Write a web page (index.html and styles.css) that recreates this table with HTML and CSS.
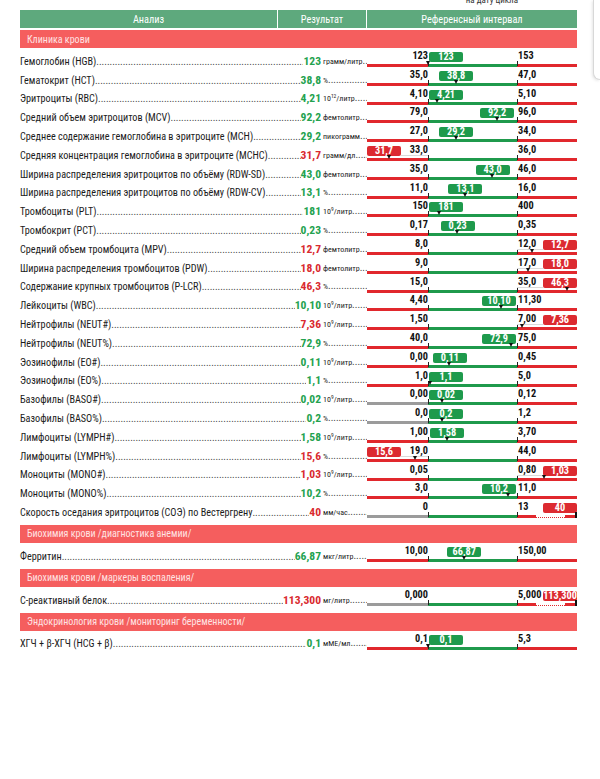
FILE: index.html
```html
<!DOCTYPE html>
<html lang="ru">
<head>
<meta charset="utf-8">
<title>Анализ крови</title>
<link rel="stylesheet" href="styles.css">
</head>
<body>
<div class="side"></div>
<div class="page">
  <div class="topnote"><span>на дату цикла</span></div>
  <div class="thead">
    <div class="th-name">Анализ</div>
    <div class="th-res">Результат</div>
    <div class="th-ref">Референсный интервал</div>
  </div>

  <div class="sect first">Клиника крови</div>

  <div class="row">
    <div class="name"><span class="lbl">Гемоглобин (HGB)</span><span class="dots"></span><b class="val g">123</b></div>
    <div class="unit"><span class="u">грамм/литр</span><span class="dots"></span></div>
    <div class="scale">
      <div class="track"><i class="zl"></i><i class="zm"></i><i class="zh"></i></div>
      <i class="tick l"></i><i class="tick h"></i>
      <span class="lim l">123</span><span class="lim h">153</span>
      <span class="badge g" style="left:62px">123</span><i class="ptr" style="left:61px"></i>
    </div>
  </div>

  <div class="row">
    <div class="name"><span class="lbl">Гематокрит (HCT)</span><span class="dots"></span><b class="val g">38,8</b></div>
    <div class="unit"><span class="u">%</span><span class="dots"></span></div>
    <div class="scale">
      <div class="track"><i class="zl"></i><i class="zm"></i><i class="zh"></i></div>
      <i class="tick l"></i><i class="tick h"></i>
      <span class="lim l">35,0</span><span class="lim h">47,0</span>
      <span class="badge g" style="left:72.2px">38,8</span><i class="ptr" style="left:89.2px"></i>
    </div>
  </div>

  <div class="row">
    <div class="name"><span class="lbl">Эритроциты (RBC)</span><span class="dots"></span><b class="val g">4,21</b></div>
    <div class="unit"><span class="u">10<sup>12</sup>/литр</span><span class="dots"></span></div>
    <div class="scale">
      <div class="track"><i class="zl"></i><i class="zm"></i><i class="zh"></i></div>
      <i class="tick l"></i><i class="tick h"></i>
      <span class="lim l">4,10</span><span class="lim h">5,10</span>
      <span class="badge g" style="left:62px">4,21</span><i class="ptr" style="left:70.8px"></i>
    </div>
  </div>

  <div class="row">
    <div class="name"><span class="lbl">Средний объем эритроцитов (MCV)</span><span class="dots"></span><b class="val g">92,2</b></div>
    <div class="unit"><span class="u">фемтолитр</span><span class="dots"></span></div>
    <div class="scale">
      <div class="track"><i class="zl"></i><i class="zm"></i><i class="zh"></i></div>
      <i class="tick l"></i><i class="tick h"></i>
      <span class="lim l">79,0</span><span class="lim h">96,0</span>
      <span class="badge g" style="left:113.1px">92,2</span><i class="ptr" style="left:130.1px"></i>
    </div>
  </div>

  <div class="row">
    <div class="name"><span class="lbl">Среднее содержание гемоглобина в эритроците (MCH)</span><span class="dots"></span><b class="val g">29,2</b></div>
    <div class="unit"><span class="u">пикограмм</span><span class="dots"></span></div>
    <div class="scale">
      <div class="track"><i class="zl"></i><i class="zm"></i><i class="zh"></i></div>
      <i class="tick l"></i><i class="tick h"></i>
      <span class="lim l">27,0</span><span class="lim h">34,0</span>
      <span class="badge g" style="left:72px">29,2</span><i class="ptr" style="left:89px"></i>
    </div>
  </div>

  <div class="row">
    <div class="name"><span class="lbl">Средняя концентрация гемоглобина в эритроците (MCHC)</span><span class="dots"></span><b class="val r">31,7</b></div>
    <div class="unit"><span class="u">грамм/дл</span><span class="dots"></span></div>
    <div class="scale">
      <div class="track"><i class="zl"></i><i class="zm"></i><i class="zh"></i></div>
      <i class="tick l"></i><i class="tick h"></i>
      <i class="conn lo"></i>
      <span class="lim l">33,0</span><span class="lim h">36,0</span>
      <span class="badge r out-lo">31,7</span><i class="ptr" style="left:22.4px"></i>
    </div>
  </div>

  <div class="row">
    <div class="name"><span class="lbl">Ширина распределения эритроцитов по объёму (RDW-SD)</span><span class="dots"></span><b class="val g">43,0</b></div>
    <div class="unit"><span class="u">фемтолитр</span><span class="dots"></span></div>
    <div class="scale">
      <div class="track"><i class="zl"></i><i class="zm"></i><i class="zh"></i></div>
      <i class="tick l"></i><i class="tick h"></i>
      <span class="lim l">35,0</span><span class="lim h">46,0</span>
      <span class="badge g" style="left:108.7px">43,0</span><i class="ptr" style="left:125.7px"></i>
    </div>
  </div>

  <div class="row">
    <div class="name"><span class="lbl">Ширина распределения эритроцитов по объёму (RDW-CV)</span><span class="dots"></span><b class="val g">13,1</b></div>
    <div class="unit"><span class="u">%</span><span class="dots"></span></div>
    <div class="scale">
      <div class="track"><i class="zl"></i><i class="zm"></i><i class="zh"></i></div>
      <i class="tick l"></i><i class="tick h"></i>
      <span class="lim l">11,0</span><span class="lim h">16,0</span>
      <span class="badge g" style="left:81.4px">13,1</span><i class="ptr" style="left:98.4px"></i>
    </div>
  </div>

  <div class="row">
    <div class="name"><span class="lbl">Тромбоциты (PLT)</span><span class="dots"></span><b class="val g">181</b></div>
    <div class="unit"><span class="u">10<sup>9</sup>/литр</span><span class="dots"></span></div>
    <div class="scale">
      <div class="track"><i class="zl"></i><i class="zm"></i><i class="zh"></i></div>
      <i class="tick l"></i><i class="tick h"></i>
      <span class="lim l">150</span><span class="lim h">400</span>
      <span class="badge g" style="left:62px">181</span><i class="ptr" style="left:72px"></i>
    </div>
  </div>

  <div class="row">
    <div class="name"><span class="lbl">Тромбокрит (PCT)</span><span class="dots"></span><b class="val g">0,23</b></div>
    <div class="unit"><span class="u">%</span><span class="dots"></span></div>
    <div class="scale">
      <div class="track"><i class="zl"></i><i class="zm"></i><i class="zh"></i></div>
      <i class="tick l"></i><i class="tick h"></i>
      <span class="lim l">0,17</span><span class="lim h">0,35</span>
      <span class="badge g" style="left:73.7px">0,23</span><i class="ptr" style="left:90.7px"></i>
    </div>
  </div>

  <div class="row">
    <div class="name"><span class="lbl">Средний объем тромбоцита (MPV)</span><span class="dots"></span><b class="val r">12,7</b></div>
    <div class="unit"><span class="u">фемтолитр</span><span class="dots"></span></div>
    <div class="scale">
      <div class="track"><i class="zl"></i><i class="zm"></i><i class="zh"></i></div>
      <i class="tick l"></i><i class="tick h"></i>
      <i class="conn hi"></i>
      <span class="lim l">8,0</span><span class="lim h">12,0</span>
      <span class="badge r out-hi">12,7</span><i class="ptr" style="left:165.6px"></i>
    </div>
  </div>

  <div class="row">
    <div class="name"><span class="lbl">Ширина распределения тромбоцитов (PDW)</span><span class="dots"></span><b class="val r">18,0</b></div>
    <div class="unit"><span class="u">фемтолитр</span><span class="dots"></span></div>
    <div class="scale">
      <div class="track"><i class="zl"></i><i class="zm"></i><i class="zh"></i></div>
      <i class="tick l"></i><i class="tick h"></i>
      <i class="conn hi"></i>
      <span class="lim l">9,0</span><span class="lim h">17,0</span>
      <span class="badge r out-hi">18,0</span><i class="ptr" style="left:161.1px"></i>
    </div>
  </div>

  <div class="row">
    <div class="name"><span class="lbl">Содержание крупных тромбоцитов (P-LCR)</span><span class="dots"></span><b class="val r">46,3</b></div>
    <div class="unit"><span class="u">%</span><span class="dots"></span></div>
    <div class="scale">
      <div class="track"><i class="zl"></i><i class="zm"></i><i class="zh"></i></div>
      <i class="tick l"></i><i class="tick h"></i>
      <i class="conn hi"></i>
      <span class="lim l">15,0</span><span class="lim h">35,0</span>
      <span class="badge r out-hi">46,3</span><i class="ptr" style="left:200.3px"></i>
    </div>
  </div>

  <div class="row">
    <div class="name"><span class="lbl">Лейкоциты (WBC)</span><span class="dots"></span><b class="val g">10,10</b></div>
    <div class="unit"><span class="u">10<sup>9</sup>/литр</span><span class="dots"></span></div>
    <div class="scale">
      <div class="track"><i class="zl"></i><i class="zm"></i><i class="zh"></i></div>
      <i class="tick l"></i><i class="tick h"></i>
      <span class="lim l">4,40</span><span class="lim h">11,30</span>
      <span class="badge g" style="left:115px">10,10</span><i class="ptr" style="left:134.5px"></i>
    </div>
  </div>

  <div class="row">
    <div class="name"><span class="lbl">Нейтрофилы (NEUT#)</span><span class="dots"></span><b class="val r">7,36</b></div>
    <div class="unit"><span class="u">10<sup>9</sup>/литр</span><span class="dots"></span></div>
    <div class="scale">
      <div class="track"><i class="zl"></i><i class="zm"></i><i class="zh"></i></div>
      <i class="tick l"></i><i class="tick h"></i>
      <i class="conn hi"></i>
      <span class="lim l">1,50</span><span class="lim h">7,00</span>
      <span class="badge r out-hi">7,36</span><i class="ptr" style="left:155.8px"></i>
    </div>
  </div>

  <div class="row">
    <div class="name"><span class="lbl">Нейтрофилы (NEUT%)</span><span class="dots"></span><b class="val g">72,9</b></div>
    <div class="unit"><span class="u">%</span><span class="dots"></span></div>
    <div class="scale">
      <div class="track"><i class="zl"></i><i class="zm"></i><i class="zh"></i></div>
      <i class="tick l"></i><i class="tick h"></i>
      <span class="lim l">40,0</span><span class="lim h">75,0</span>
      <span class="badge g" style="left:115px">72,9</span><i class="ptr" style="left:144.7px"></i>
    </div>
  </div>

  <div class="row">
    <div class="name"><span class="lbl">Эозинофилы (EO#)</span><span class="dots"></span><b class="val g">0,11</b></div>
    <div class="unit"><span class="u">10<sup>9</sup>/литр</span><span class="dots"></span></div>
    <div class="scale">
      <div class="track"><i class="zl"></i><i class="zm"></i><i class="zh"></i></div>
      <i class="tick l"></i><i class="tick h"></i>
      <span class="lim l">0,00</span><span class="lim h">0,45</span>
      <span class="badge g" style="left:65.8px">0,11</span><i class="ptr" style="left:82.8px"></i>
    </div>
  </div>

  <div class="row">
    <div class="name"><span class="lbl">Эозинофилы (EO%)</span><span class="dots"></span><b class="val g">1,1</b></div>
    <div class="unit"><span class="u">%</span><span class="dots"></span></div>
    <div class="scale">
      <div class="track"><i class="zl"></i><i class="zm"></i><i class="zh"></i></div>
      <i class="tick l"></i><i class="tick h"></i>
      <span class="lim l">1,0</span><span class="lim h">5,0</span>
      <span class="badge g" style="left:62px">1,1</span><i class="ptr" style="left:63.2px"></i>
    </div>
  </div>

  <div class="row">
    <div class="name"><span class="lbl">Базофилы (BASO#)</span><span class="dots"></span><b class="val g">0,02</b></div>
    <div class="unit"><span class="u">10<sup>9</sup>/литр</span><span class="dots"></span></div>
    <div class="scale">
      <div class="track"><i class="zl gray"></i><i class="zm"></i><i class="zh"></i></div>
      <i class="tick l"></i><i class="tick h"></i>
      <span class="lim l">0,00</span><span class="lim h">0,12</span>
      <span class="badge g" style="left:62px">0,02</span><i class="ptr" style="left:75.8px"></i>
    </div>
  </div>

  <div class="row">
    <div class="name"><span class="lbl">Базофилы (BASO%)</span><span class="dots"></span><b class="val g">0,2</b></div>
    <div class="unit"><span class="u">%</span><span class="dots"></span></div>
    <div class="scale">
      <div class="track"><i class="zl gray"></i><i class="zm"></i><i class="zh"></i></div>
      <i class="tick l"></i><i class="tick h"></i>
      <span class="lim l">0,0</span><span class="lim h">1,2</span>
      <span class="badge g" style="left:62px">0,2</span><i class="ptr" style="left:75.8px"></i>
    </div>
  </div>

  <div class="row">
    <div class="name"><span class="lbl">Лимфоциты (LYMPH#)</span><span class="dots"></span><b class="val g">1,58</b></div>
    <div class="unit"><span class="u">10<sup>9</sup>/литр</span><span class="dots"></span></div>
    <div class="scale">
      <div class="track"><i class="zl"></i><i class="zm"></i><i class="zh"></i></div>
      <i class="tick l"></i><i class="tick h"></i>
      <span class="lim l">1,00</span><span class="lim h">3,70</span>
      <span class="badge g" style="left:63.1px">1,58</span><i class="ptr" style="left:80.1px"></i>
    </div>
  </div>

  <div class="row">
    <div class="name"><span class="lbl">Лимфоциты (LYMPH%)</span><span class="dots"></span><b class="val r">15,6</b></div>
    <div class="unit"><span class="u">%</span><span class="dots"></span></div>
    <div class="scale">
      <div class="track"><i class="zl"></i><i class="zm"></i><i class="zh"></i></div>
      <i class="tick l"></i><i class="tick h"></i>
      <i class="conn lo"></i>
      <span class="lim l">19,0</span><span class="lim h">44,0</span>
      <span class="badge r out-lo">15,6</span><i class="ptr" style="left:48.9px"></i>
    </div>
  </div>

  <div class="row">
    <div class="name"><span class="lbl">Моноциты (MONO#)</span><span class="dots"></span><b class="val r">1,03</b></div>
    <div class="unit"><span class="u">10<sup>9</sup>/литр</span><span class="dots"></span></div>
    <div class="scale">
      <div class="track"><i class="zl"></i><i class="zm"></i><i class="zh"></i></div>
      <i class="tick l"></i><i class="tick h"></i>
      <i class="conn hi"></i>
      <span class="lim l">0,05</span><span class="lim h">0,80</span>
      <span class="badge r out-hi">1,03</span><i class="ptr" style="left:177.3px"></i>
    </div>
  </div>

  <div class="row">
    <div class="name"><span class="lbl">Моноциты (MONO%)</span><span class="dots"></span><b class="val g">10,2</b></div>
    <div class="unit"><span class="u">%</span><span class="dots"></span></div>
    <div class="scale">
      <div class="track"><i class="zl"></i><i class="zm"></i><i class="zh"></i></div>
      <i class="tick l"></i><i class="tick h"></i>
      <span class="lim l">3,0</span><span class="lim h">11,0</span>
      <span class="badge g" style="left:115px">10,2</span><i class="ptr" style="left:141.1px"></i>
    </div>
  </div>

  <div class="row">
    <div class="name"><span class="lbl">Скорость оседания эритроцитов (СОЭ) по Вестергрену</span><span class="dots"></span><b class="val r">40</b></div>
    <div class="unit"><span class="u">мм/час</span><span class="dots"></span></div>
    <div class="scale">
      <div class="track"><i class="zl gray"></i><i class="zm"></i><i class="zh over"><i class="s1"></i><i class="dl"></i><i class="s2"></i></i></div>
      <i class="tick l"></i><i class="tick h"></i>
      <span class="lim l">0</span><span class="lim h">13</span>
      <span class="badge r out-hi">40</span><i class="endmark"></i>
    </div>
  </div>

  <div class="sect">Биохимия крови /диагностика анемии/</div>

  <div class="row">
    <div class="name"><span class="lbl">Ферритин</span><span class="dots"></span><b class="val g">66,87</b></div>
    <div class="unit"><span class="u">мкг/литр</span><span class="dots"></span></div>
    <div class="scale">
      <div class="track"><i class="zl"></i><i class="zm"></i><i class="zh"></i></div>
      <i class="tick l"></i><i class="tick h"></i>
      <span class="lim l">10,00</span><span class="lim h">150,00</span>
      <span class="badge g" style="left:80.2px">66,87</span><i class="ptr" style="left:97.2px"></i>
    </div>
  </div>

  <div class="sect">Биохимия крови /маркеры воспаления/</div>

  <div class="row">
    <div class="name"><span class="lbl">С-реактивный белок</span><span class="dots"></span><b class="val r">113,300</b></div>
    <div class="unit"><span class="u">мг/литр</span><span class="dots"></span></div>
    <div class="scale">
      <div class="track"><i class="zl gray"></i><i class="zm"></i><i class="zh over"><i class="s1"></i><i class="dl"></i><i class="s2"></i></i></div>
      <i class="tick l"></i><i class="tick h"></i>
      <span class="lim l">0,000</span><span class="lim h">5,000</span>
      <span class="badge r out-hi">113,300</span><i class="endmark"></i>
    </div>
  </div>

  <div class="sect">Эндокринология крови /мониторинг беременности/</div>

  <div class="row">
    <div class="name"><span class="lbl">ХГЧ + β-ХГЧ (HCG + β)</span><span class="dots"></span><b class="val g">0,1</b></div>
    <div class="unit"><span class="u">мМЕ/мл</span><span class="dots"></span></div>
    <div class="scale">
      <div class="track"><i class="zl"></i><i class="zm"></i><i class="zh"></i></div>
      <i class="tick l"></i><i class="tick h"></i>
      <span class="lim l">0,1</span><span class="lim h">5,3</span>
      <span class="badge g" style="left:62px">0,1</span><i class="ptr" style="left:61px"></i>
    </div>
  </div>
</div>
</body>
</html>
```

FILE: styles.css
```css
* { box-sizing: border-box; margin: 0; padding: 0; }

html, body { background: #fff; }

body {
  width: 600px;
  height: 779px;
  overflow: hidden;
  position: relative;
  font-family: "Liberation Sans Narrow", "Roboto Condensed", Roboto, sans-serif;
  color: #1c1c1c;
}

.page {
  width: 577px;
  padding-left: 20px;
}

.side {
  position: absolute;
  left: 593px;
  top: 0;
  width: 7px;
  height: 80px;
  border: 1px solid #d8d8d8;
  border-top: none;
  border-right: none;
  border-bottom-left-radius: 9px;
  background: #fff;
  box-shadow: -1px 1px 3px rgba(0, 0, 0, 0.10);
}

.topnote {
  height: 5px;
  margin-bottom: 5px;
  overflow: hidden;
  display: flex;
  justify-content: flex-end;
  align-items: flex-end;
  padding-right: 59px;
  font-size: 9px;
  color: #333;
}
.topnote span { display: block; line-height: 9px; flex: none; }

.thead {
  display: flex;
  gap: 1px;
  height: 18px;
}
.thead div {
  background: #5ea97d;
  color: #fff;
  font-size: 10.3px;
  display: flex;
  align-items: center;
  justify-content: center;
}
.th-name { width: 257px; }
.th-res { width: 88px; }
.th-ref { flex: 1; }

.sect {
  height: 18px;
  margin-top: 7px;
  background: #f55e5e;
  color: #ffe3e3;
  font-size: 10px;
  padding-left: 7px;
  display: flex;
  align-items: center;
}
.sect.first { margin-top: 2px; }

.row {
  display: flex;
  align-items: flex-end;
  height: 18.8px;
}

.name {
  width: 301px;
  display: flex;
  align-items: baseline;
  font-size: 10.2px;
  line-height: 12px;
  white-space: nowrap;
  margin-bottom: -1px;
}
.lbl { flex: none; }

.dots {
  flex: 1;
  min-width: 0;
  overflow: hidden;
  white-space: nowrap;
  color: #444;
  font-size: 10px;
}
.dots::before {
  content: "................................................................................................................................................................................................................................................................";
}

.val {
  flex: none;
  font-weight: 700;
  font-size: 11.6px;
}
.val.g { color: #24a24f; }
.val.r { color: #d92a2f; }

.unit {
  width: 46px;
  padding-left: 2px;
  display: flex;
  align-items: baseline;
  font-size: 8px;
  line-height: 12px;
  white-space: nowrap;
  margin-bottom: -1px;
}
.u { flex: none; }
.u sup { font-size: 5.5px; vertical-align: 3px; line-height: 0; }

.scale {
  width: 210px;
  height: 100%;
  position: relative;
  padding-top: 16px;
}

.track {
  display: flex;
  height: 3px;
}
.track i { display: block; height: 3px; }
.zl { width: 61px; background: #e1282d; }
.zl.gray { background: #9b9b9b; }
.zm { width: 89px; background: #1f9a4c; }
.zh { flex: 1; background: #e1282d; }
.zh.over { background: none; display: flex; align-items: flex-end; }
.zh.over .s1 { width: 19px; height: 3px; background: #e1282d; }
.zh.over .dl { flex: 1; height: 1px; border-bottom: 1px dotted #e1282d; }
.zh.over .s2 { width: 12px; height: 3px; background: #e1282d; }

.tick {
  position: absolute;
  top: 13px;
  width: 1.3px;
  height: 5px;
  background: #222;
}
.tick.l { left: 60.5px; }
.tick.h { left: 149.5px; }

.conn {
  position: absolute;
  top: 13px;
  height: 1px;
  background: #dadada;
}
.conn.lo { left: 34px; width: 27px; }
.conn.hi { left: 150px; width: 26px; }

.lim {
  position: absolute;
  top: 3px;
  font-size: 10.3px;
  font-weight: 700;
  line-height: 10px;
  color: #111;
  background: #fff;
}
.lim.l { right: 149px; }
.lim.h { left: 151px; }

.badge {
  position: absolute;
  top: 4px;
  width: 34px;
  height: 10px;
  border-radius: 2px;
  color: #fff;
  font-size: 10.3px;
  font-weight: 700;
  line-height: 10px;
  text-align: center;
  white-space: nowrap;
}
.badge.g { background: #1e9a4c; }
.badge.r { background: #dc2a30; }
.badge.out-lo { left: 0; }
.badge.out-hi { left: 176px; }

.ptr {
  position: absolute;
  top: 13px;
  width: 0;
  height: 0;
  margin-left: -2.5px;
  border-left: 2.5px solid transparent;
  border-right: 2.5px solid transparent;
  border-top: 4px solid #111;
}

.endmark {
  position: absolute;
  left: 208px;
  top: 13px;
  width: 2px;
  height: 6px;
  background: #111;
}
```
